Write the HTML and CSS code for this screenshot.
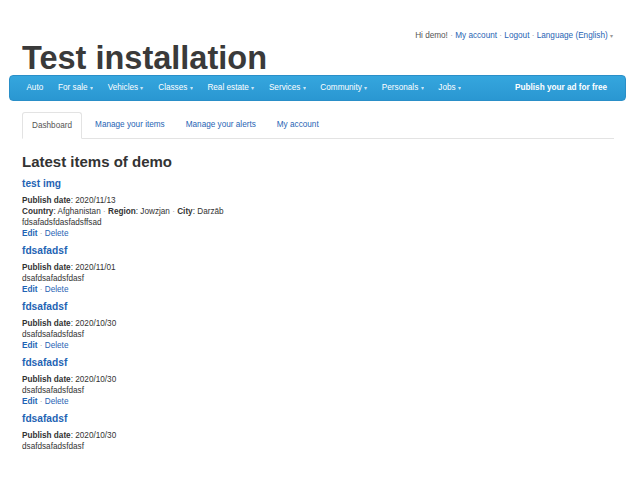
FILE: index.html
```html
<!DOCTYPE html>
<html lang="en">
<head>
  <meta charset="UTF-8">
  <title>Test installation - Dashboard</title>
  <link rel="stylesheet" href="styles.css">
</head>
<body>
  <div class="page">
    <div class="user-bar">
      Hi demo! <span class="sep">·</span>
      <a href="#">My account</a> <span class="sep">·</span>
      <a href="#">Logout</a> <span class="sep">·</span>
      <a href="#">Language (English)</a> <span class="caret-grey">▾</span>
    </div>

    <h1 class="logo">Test installation</h1>

    <nav class="main-nav">
      <ul class="cats">
        <li><a href="#">Auto</a></li>
        <li><a href="#">For sale <span class="caret">▾</span></a></li>
        <li><a href="#">Vehicles <span class="caret">▾</span></a></li>
        <li><a href="#">Classes <span class="caret">▾</span></a></li>
        <li><a href="#">Real estate <span class="caret">▾</span></a></li>
        <li><a href="#">Services <span class="caret">▾</span></a></li>
        <li><a href="#">Community <span class="caret">▾</span></a></li>
        <li><a href="#">Personals <span class="caret">▾</span></a></li>
        <li><a href="#">Jobs <span class="caret">▾</span></a></li>
      </ul>
      <a class="publish" href="#">Publish your ad for free</a>
    </nav>

    <ul class="tabs">
      <li class="active"><a href="#">Dashboard</a></li>
      <li><a href="#">Manage your items</a></li>
      <li><a href="#">Manage your alerts</a></li>
      <li><a href="#">My account</a></li>
    </ul>

    <h2 class="section-title">Latest items of demo</h2>

    <div class="item">
      <a class="item-title" href="#">test img</a>
      <p><b>Publish date</b>: 2020/11/13</p>
      <p><b>Country</b>: Afghanistan <span class="sep">·</span> <b>Region</b>: Jowzjan <span class="sep">·</span> <b>City</b>: Darzāb</p>
      <p>fdsafadsfdasfadsffsad</p>
      <p class="actions"><a class="edit" href="#">Edit</a> <span class="sep">·</span> <a href="#">Delete</a></p>
    </div>

    <div class="item">
      <a class="item-title" href="#">fdsafadsf</a>
      <p><b>Publish date</b>: 2020/11/01</p>
      <p>dsafdsafadsfdasf</p>
      <p class="actions"><a class="edit" href="#">Edit</a> <span class="sep">·</span> <a href="#">Delete</a></p>
    </div>

    <div class="item">
      <a class="item-title" href="#">fdsafadsf</a>
      <p><b>Publish date</b>: 2020/10/30</p>
      <p>dsafdsafadsfdasf</p>
      <p class="actions"><a class="edit" href="#">Edit</a> <span class="sep">·</span> <a href="#">Delete</a></p>
    </div>

    <div class="item">
      <a class="item-title" href="#">fdsafadsf</a>
      <p><b>Publish date</b>: 2020/10/30</p>
      <p>dsafdsafadsfdasf</p>
      <p class="actions"><a class="edit" href="#">Edit</a> <span class="sep">·</span> <a href="#">Delete</a></p>
    </div>

    <div class="item">
      <a class="item-title" href="#">fdsafadsf</a>
      <p><b>Publish date</b>: 2020/10/30</p>
      <p>dsafdsafadsfdasf</p>
    </div>
  </div>
</body>
</html>
```

FILE: styles.css
```css
body {
  margin: 0;
  font-family: "Liberation Sans", Arial, sans-serif;
  color: #333;
  background: #fff;
}
a {
  color: #1f64b4;
  text-decoration: none;
}
.page {
  padding: 0 14px 0 22px;
}
.user-bar {
  text-align: right;
  font-size: 8.2px;
  color: #555;
  padding: 30px 13px 0 0;
  line-height: 11px;
}
.sep {
  color: #aaa;
}
.caret-grey {
  color: #999;
  font-size: 6px;
}
.logo {
  margin: 0;
  font-size: 32.5px;
  line-height: 32px;
  color: #3a3a3a;
}
.main-nav {
  margin: 1px 0 0 -13px;
  height: 26px;
  border-radius: 4px;
  background: linear-gradient(#35a6de, #2a97d2);
  border: 1px solid #2a8fc8;
  box-sizing: border-box;
  display: flex;
  align-items: center;
  justify-content: space-between;
  padding: 0 18px 0 9px;
}
.cats {
  list-style: none;
  margin: 0;
  padding: 0;
  display: flex;
  align-items: center;
}
.cats li {
  font-size: 8.2px;
  line-height: 12px;
  padding: 0 7.4px;
}
.cats a {
  color: #fff;
}
.caret {
  font-size: 6px;
  opacity: 0.75;
}
.publish {
  color: #fff;
  font-weight: bold;
  font-size: 8.2px;
  line-height: 12px;
}
.tabs {
  list-style: none;
  margin: 11px 12px 0 0;
  padding: 0;
  display: flex;
  border-bottom: 1px solid #e3e3e3;
  height: 26px;
}
.tabs li {
  font-size: 8.2px;
  line-height: 25px;
  padding: 0 10px;
  margin-right: 1px;
}
.tabs li.active {
  padding: 0 9px;
  margin-right: 3px;
  border: 1px solid #e3e3e3;
  border-bottom-color: #fff;
  border-radius: 3px 3px 0 0;
  height: 25px;
}
.tabs li.active a {
  color: #555;
}
.section-title {
  margin: 14px 0 6px;
  font-size: 15px;
  line-height: 18px;
}
.item {
  margin-bottom: 5px;
}
.item-title {
  display: block;
  font-size: 10.2px;
  font-weight: bold;
  line-height: 13px;
  margin-bottom: 5px;
}
.item p {
  margin: 0;
  font-size: 8.2px;
  line-height: 11px;
}
.item .edit {
  font-weight: bold;
}
```
